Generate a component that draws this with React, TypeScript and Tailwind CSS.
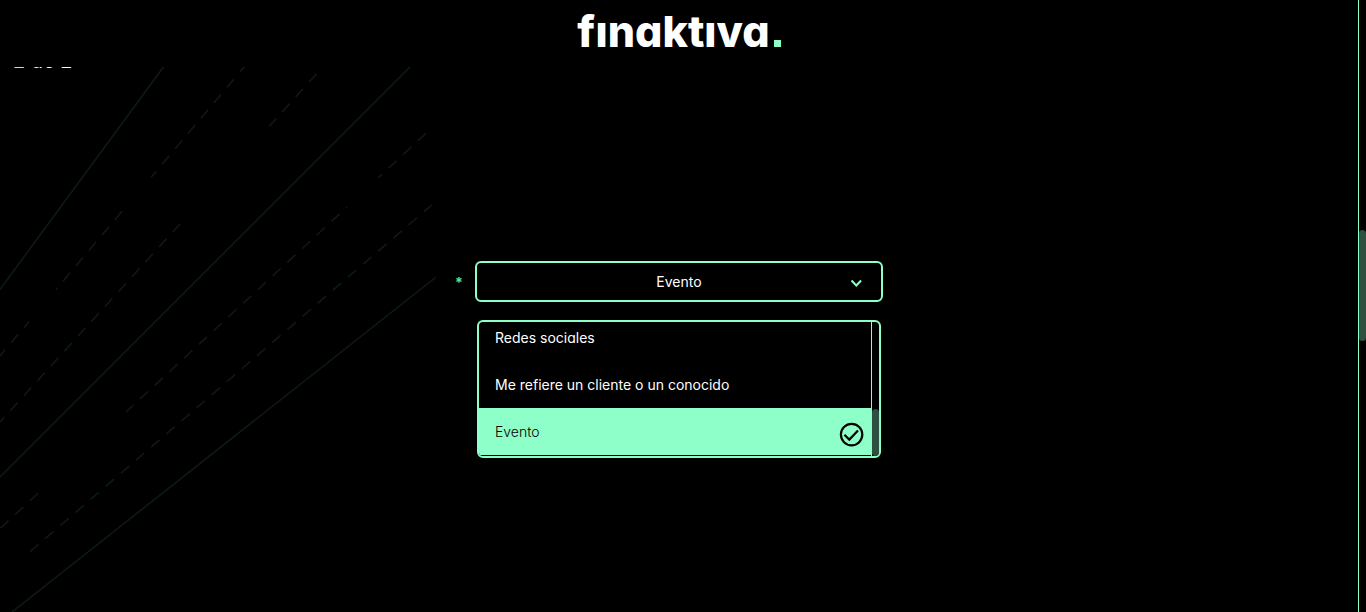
type Stroke = { x1: number; y1: number; x2: number; y2: number; dash?: string; offset?: number };

const strokes: Stroke[] = [
  { x1: 163.5, y1: 67, x2: 0, y2: 289.5 },
  { x1: 410, y1: 67, x2: 0, y2: 477 },
  { x1: 435.5, y1: 277.5, x2: 12, y2: 612 },
  { x1: 247, y1: 63.7, x2: 151.3, y2: 177, dash: "11 9.1" },
  { x1: 122, y1: 211.3, x2: 56, y2: 289.5, dash: "11 9.1" },
  { x1: 29.3, y1: 321.3, x2: -1, y2: 357, dash: "11 9.1", offset: 3 },
  { x1: 330, y1: 59, x2: 269.5, y2: 126, dash: "11 9.1" },
  { x1: 180, y1: 224, x2: 0, y2: 422, dash: "11 9.1" },
  { x1: 426, y1: 133.3, x2: 378.3, y2: 177.7, dash: "11 9.1" },
  { x1: 347, y1: 207, x2: 126, y2: 412, dash: "11 9.1", offset: 10 },
  { x1: 38, y1: 493.3, x2: 0, y2: 528.5, dash: "11 9.1" },
  { x1: 432, y1: 204.7, x2: 30, y2: 551.7, dash: "11 9" },
];

const options = ["Redes sociales", "Me refiere un cliente o un conocido", "Evento"];
const selected = "Evento";

function Backdrop() {
  return (
    <svg
      className="absolute left-0 top-0"
      width="450"
      height="612"
      viewBox="0 0 450 612"
      fill="none"
      stroke="#0d1b17"
      strokeWidth="1.5"
      aria-hidden="true"
    >
      {strokes.map((s, i) => (
        <line key={i} x1={s.x1} y1={s.y1} x2={s.x2} y2={s.y2} strokeDasharray={s.dash} strokeDashoffset={s.offset} />
      ))}
    </svg>
  );
}

function Header() {
  return (
    <header className="relative z-10 flex h-[67px] justify-center bg-black">
      <a
        href="#inicio"
        aria-label="finaktiva."
        className="text-[43px] font-extrabold leading-[62px] text-white"
      >
        fınaktıva
        <span className="ml-1 inline-block size-[7px] bg-[#8effc8]" />
      </a>
    </header>
  );
}

function SourceSelect() {
  return (
    <div className="relative mx-auto w-[408px] max-w-full">
      <label htmlFor="source" className="absolute -left-5 top-3 text-sm font-bold leading-5 text-[#5fe08f]">
        *
      </label>
      <select
        id="source"
        defaultValue={selected}
        className="block h-[41px] w-full appearance-none rounded-md border-2 border-[#8effc8] bg-black px-8 text-center text-sm text-white"
      >
        {options.map((o) => (
          <option key={o}>{o}</option>
        ))}
      </select>
      <svg
        className="pointer-events-none absolute right-5 top-4"
        width="12"
        height="12"
        viewBox="0 0 12 12"
        fill="none"
        stroke="#8effc8"
        strokeWidth="2"
        aria-hidden="true"
      >
        <path d="M.5 3.5 5.3 8.5 10.1 3.5" />
      </svg>
    </div>
  );
}

function OptionList() {
  return (
    <div className="mx-auto mt-[18px] flex h-[138px] w-[404px] max-w-full overflow-hidden rounded-md border-2 border-[#8effc8]">
      <ul role="listbox" aria-label="Opciones" className="flex flex-1 flex-col justify-end pb-px">
        {options.map((o) => (
          <li
            key={o}
            role="option"
            aria-selected={o === selected}
            className={
              o === selected
                ? "flex h-[47px] shrink-0 items-center justify-between bg-[#8effc8] pl-4 pr-2 text-sm font-light text-black"
                : "flex h-[47px] shrink-0 items-center pl-4 pr-2 text-sm text-white"
            }
          >
            {o}
            {o === selected && (
              <svg
                className="mt-1"
                width="24"
                height="24"
                viewBox="0 0 24 24"
                fill="none"
                stroke="#000"
                strokeWidth="2.2"
                overflow="visible"
                aria-hidden="true"
              >
                <circle cx="12.6" cy="12.6" r="10.7" />
                <path d="M5.4 12.8 10.3 17.6 19 8.6" />
              </svg>
            )}
          </li>
        ))}
      </ul>
      <div className="flex w-2 flex-col justify-end border-l border-[#8effc8]">
        <div className="h-[47px] rounded-md bg-[#2e5041]" />
      </div>
    </div>
  );
}

export default function App() {
  return (
    <div className="flex min-h-screen bg-black font-['Inter',sans-serif] [font-feature-settings:'cv11']">
      <div className="relative flex-1 overflow-hidden">
        <Backdrop />
        <Header />
        <main className="relative">
          <p className="-mt-[18px] pl-[13px] text-xl leading-6 text-white">
            <span className="text-[#8effc8]">2</span> de 2
          </p>
          <div className="pt-[188px]">
            <SourceSelect />
            <OptionList />
          </div>
        </main>
      </div>
      <div className="w-2 border-l border-[#8effc8] pt-[230px]">
        <div className="h-[111px] rounded-md bg-[#2e5041]" />
      </div>
    </div>
  );
}
